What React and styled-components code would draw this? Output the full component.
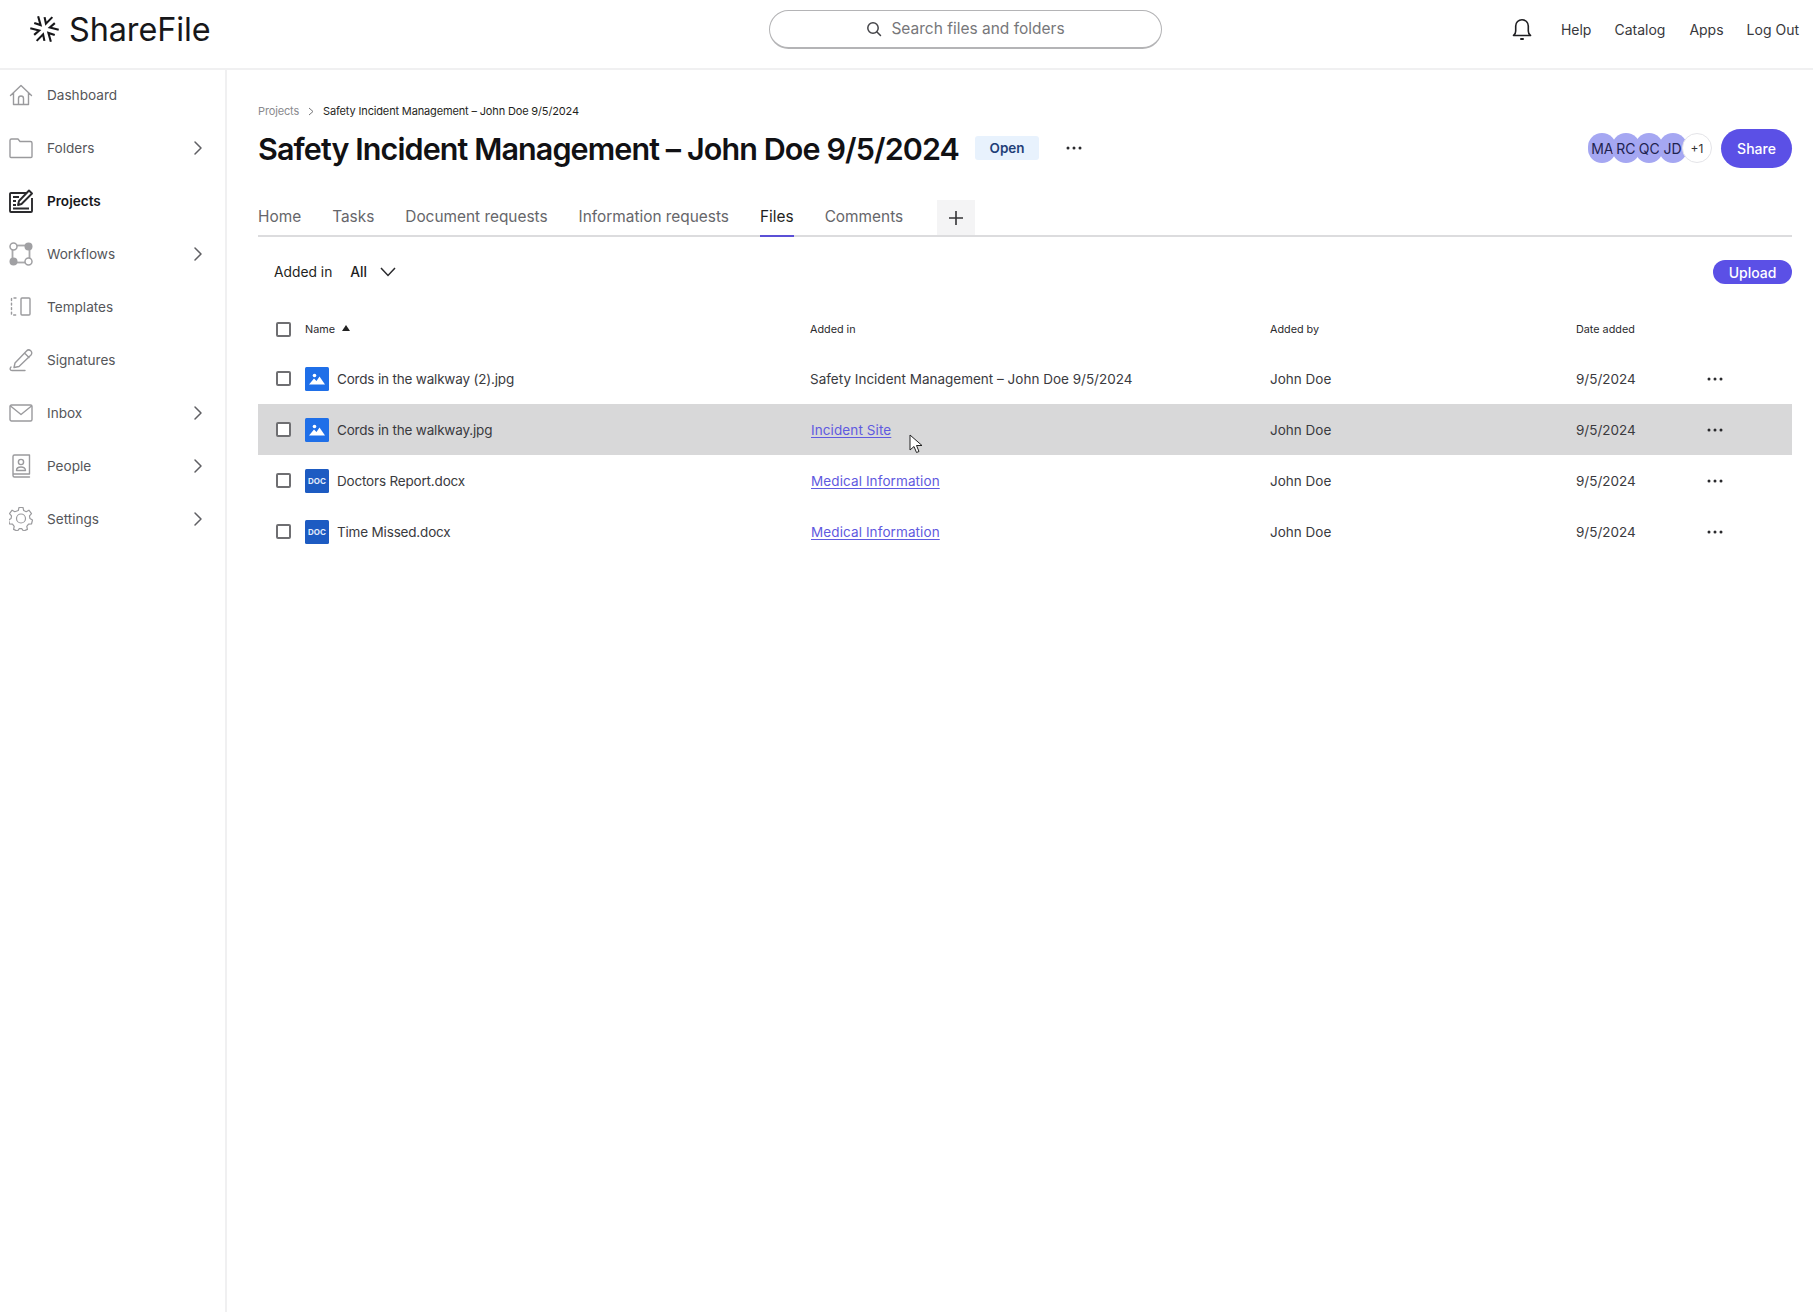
import React from "react";
import styled, { createGlobalStyle } from "styled-components";

const Global = createGlobalStyle`
  html, body { margin: 0; padding: 0; background: #fff; }
  body { font-family: Inter, "Liberation Sans", sans-serif; color: #1c1c1e; }
  * { box-sizing: border-box; }
`;

const Page = styled.div`
  width: 1813px; height: 1312px; overflow: hidden; display: flex; flex-direction: column; background: #fff;
`;
const Header = styled.header`
  height: 70px; flex: none; display: flex; align-items: center; position: relative;
  border-bottom: 2px solid #f0f0f1; padding: 0 14px 10px 30px; justify-content: space-between;
`;
const Brand = styled.div`
  display: flex; align-items: center; gap: 10px; width: 739px; height: 60px; color: #17171a;
`;
const BrandName = styled.span`
  font-size: 32.4px; font-weight: 400; letter-spacing: -0.1px;
`;
const Search = styled.div`
  width: 393px; height: 39px; border: 1px solid #b4b4b6; border-bottom-width: 2px; border-radius: 20px;
  display: flex; align-items: center; justify-content: center; gap: 9px;
  color: #77777a; font-size: 15.5px;
`;
const TopRight = styled.nav`
  display: flex; align-items: center; font-size: 14px; color: #38383c;
`;
const TopLink = styled.span`
  margin-left: ${p => p.$gap}px;
`;
const Body = styled.div`
  flex: 1; display: flex; min-height: 0;
`;
const Sidebar = styled.aside`
  width: 227px; flex: none; border-right: 2px solid #f0f0f1;
`;
const NavItem = styled.div`
  height: 53px; display: flex; align-items: center; padding: 0 22px 0 9px; gap: 14px;
  font-size: 13.6px; color: ${p => p.$active ? "#17171a" : "#55565a"}; font-weight: ${p => p.$active ? 600 : 400};
  margin-top: ${p => p.$first ? "-2px" : "0"};
`;
const NavIcon = styled.span`
  width: 24px; height: 24px; display: flex; align-items: center; justify-content: center; flex: none;
`;
const NavLabel = styled.span`
  flex: 1;
`;
const Main = styled.main`
  flex: 1; padding: 33px 21px 0 31px; position: relative; min-width: 0;
`;
const Crumbs = styled.div`
  display: flex; align-items: center; font-size: 11px; height: 16px; color: #1f1f22; letter-spacing: -0.15px;
`;
const CrumbRoot = styled.span`
  color: #8a8a8e;
`;
const CrumbSep = styled.span`
  margin: 0 9px 0 9px; display: flex;
`;
const TitleRow = styled.div`
  display: flex; align-items: center; margin-top: 7px; height: 44px;
`;
const Title = styled.h1`
  margin: 0; font-size: 30.5px; font-weight: 600; color: #111114; letter-spacing: -0.9px; white-space: nowrap;
`;
const Status = styled.span`
  margin-left: 16px; width: 64px; height: 24px; border-radius: 3px; background: #e8f2fd; color: #1f3f78;
  font-size: 13.5px; font-weight: 600; display: flex; align-items: center; justify-content: center;
`;
const MoreBtn = styled.span`
  margin-left: 27px; display: flex;
`;
const Spacer = styled.div`
  flex: 1;
`;
const Avatars = styled.div`
  display: flex; align-items: center; margin-right: 9px;
`;
const Avatar = styled.span`
  width: 28px; height: 30px; border-radius: 15px; background: #a5a7f2; color: #1f2350; font-size: 14px;
  display: flex; align-items: center; justify-content: center; overflow: hidden; margin-left: ${p => p.$first ? 0 : "-4.6px"};
  white-space: nowrap;
`;
const AvatarMore = styled.span`
  width: 30px; height: 30px; border-radius: 50%; background: #fff; border: 1px solid #e4e4e8; margin-left: -4.6px;
  font-size: 12px; color: #333; display: flex; align-items: center; justify-content: center; position: relative;
`;
const PrimaryBtn = styled.button`
  border: 0; background: #5b50e6; color: #fff; font-family: inherit; font-weight: 500; padding: 0; border-radius: 20px;
  width: ${p => p.$w}px; height: ${p => p.$h}px; font-size: 14px;
`;
const Tabs = styled.div`
  display: flex; align-items: stretch; height: 47px; margin-top: 20px; border-bottom: 2px solid #dcdcde; font-size: 15.4px;
`;
const Tab = styled.div`
  display: flex; align-items: center; margin-right: 31px; padding-top: 7px; margin-bottom: -2px;
  color: ${p => p.$active ? "#1f1f22" : "#66666a"}; font-weight: 400;
  border-bottom: 2px solid ${p => p.$active ? "#5b50d6" : "transparent"};
`;
const AddTab = styled.div`
  width: 38px; height: 35px; margin-left: 3px; background: #f4f4f5; display: flex; align-items: center; justify-content: center; align-self: flex-end;
`;
const FilterRow = styled.div`
  height: 70px; display: flex; align-items: center; padding-left: 16px; font-size: 13.8px; color: #1f1f22;
`;
const FilterValue = styled.span`
  margin-left: 18px; font-weight: 500;
`;
const Chevron = styled.span`
  margin-left: 13px; display: flex;
`;
const Row = styled.div`
  display: grid; grid-template-columns: 29px 505px 460px 306px 131px 85px; height: 51px; align-items: center;
  padding-left: 18px; font-size: 13.5px; color: ${p => p.$head ? "#2a2a2d" : "#3a3a3e"};
  background: ${p => p.$hover ? "#d8d8d9" : "transparent"};
`;
const HeadRow = styled(Row)`
  height: 40px; margin-top: 2px; margin-bottom: 4px; font-size: 10.8px;
`;
const CheckBox = styled.span`
  width: 15px; height: 15px; border: 2px solid #6f6f72; border-radius: 2px; background: #fff; display: block;
`;
const NameCell = styled.div`
  display: flex; align-items: center; gap: 8px; white-space: nowrap;
`;
const FileName = styled.span`
  letter-spacing: -0.18px;
`;
const SortMark = styled.span`
  margin-left: -1px; display: flex; margin-bottom: 2px;
`;
const FileTile = styled.span`
  width: 24px; height: 24px; border-radius: 1.5px; background: ${p => p.$doc ? "#1d5bc2" : "#1f6fe8"};
  color: #e3ecfb; font-size: 8px; font-weight: 700; display: flex; align-items: center; justify-content: center;
`;
const Link = styled.a`
  color: #5f5ae0; text-decoration: underline; text-underline-offset: 2px; margin-left: 1px; letter-spacing: 0.1px;
`;
const Dots = styled.span`
  display: flex;
`;
const Cursor = styled.svg`
  position: absolute; left: 682px; top: 364px;
`;

const s = { fill: "none", stroke: "#9a9a9d", strokeWidth: 1.4, strokeLinecap: "round", strokeLinejoin: "round" };

const LogoMark = () => (
  <svg width="29" height="30" viewBox="0 0 29 30" fill="none" stroke="#17171a" strokeWidth="2.100">
    {[15, 75, 135, 195, 255, 315].map(a => (
      <path key={a} transform={`rotate(${a} 14.500 15)`} d="M11.500 3.500 L14.500 9.500 L19 1.500" />
    ))}
  </svg>
);

const Home = () => <svg width="24" height="24" viewBox="0 0 24 24" {...s}><path d="M1.500 12.500 12 2.500l10.500 10M4.500 10v11.500h15V10M9.500 21.500v-6a2.500 2.500 0 0 1 5 0v6" /></svg>;
const Folder = () => <svg width="24" height="22" viewBox="0 0 24 22" {...s}><path d="M1 3.500A1.500 1.500 0 0 1 2.500 2H9l2 2.500h10.500A1.500 1.500 0 0 1 23 6v13.500a1 1 0 0 1-1 1H2a1 1 0 0 1-1-1z" /></svg>;
const ProjectsIcon = () => <svg width="24" height="24" viewBox="0 0 24 24" fill="none" stroke="#2a2a2d" strokeWidth="1.900" strokeLinejoin="round"><path d="M17 4H2a1 1 0 0 0-1 1v17a1 1 0 0 0 1 1h20a1 1 0 0 0 1-1V9" /><path d="M9 16l1-4L20 1.500l3 3L12.500 15zM4 8h6M4 12h3M4 16h3M4 19.500h16" /></svg>;
const Workflows = () => <svg width="24" height="24" viewBox="0 0 24 24" fill="none"><rect x="3.500" y="3.500" width="17" height="17" stroke="#a9a9ab" strokeWidth="1.800" /><circle cx="4.500" cy="4.500" r="3.500" fill="#fff" stroke="#a0a0a3" strokeWidth="1.500"/><circle cx="19.500" cy="4.500" r="4" fill="#a0a0a3"/><circle cx="4.500" cy="19.500" r="4" fill="#a0a0a3"/><circle cx="19.500" cy="19.500" r="3.500" fill="#fff" stroke="#a0a0a3" strokeWidth="1.500"/></svg>;
const Templates = () => <svg width="22" height="20" viewBox="0 0 22 20" {...s}><rect x="11" y="1" width="9" height="17" rx="1" /><path d="M6 1H2.500A1 1 0 0 0 1.500 2v15a1 1 0 0 0 1 1H6" strokeDasharray="2 2.500" /></svg>;
const Signatures = () => <svg width="24" height="24" viewBox="0 0 24 24" {...s}><path d="M6 15 17.500 3a3 3 0 0 1 4.500 4L10 18.500l-5 1zM15.500 5l4.500 4.500" /><path d="M2 19c-1.500 1.500-1 3.500 1 3.500h13" /></svg>;
const Inbox = () => <svg width="24" height="18" viewBox="0 0 24 18" {...s}><rect x="1" y="1" width="22" height="16" rx="1.500" /><path d="M1.500 2 12 10.500 22.500 2" /></svg>;
const People = () => <svg width="20" height="24" viewBox="0 0 20 24" {...s}><path d="M2 20V2.500A1.500 1.500 0 0 1 3.500 1h15v19zM2 20v1.500A1.500 1.500 0 0 0 3.500 23h15" /><circle cx="10" cy="8" r="2.600" /><path d="M5.500 16.500c0-2.500 2-3.500 4.500-3.500s4.500 1 4.500 3.500z" /></svg>;
const Gear = () => (
  <svg width="25" height="25" viewBox="0 0 24 24" fill="none" stroke="#9a9a9d" strokeWidth="1.200" strokeLinejoin="round">
    <path d="M10 1h4l.7 3 2.500 1.200 2.700-1.500 2.600 3.400-2 2.300.4 2.600 2.600 1.500-1 4-3 .2-1.700 2.200.6 3-3.800 1.700-1.900-2.400h-2.400l-1.900 2.400-3.800-1.700.6-3-1.700-2.200-3-.2-1-4 2.600-1.500.4-2.600-2-2.300 2.600-3.400 2.700 1.500L9.300 4z" />
    <circle cx="12" cy="12" r="4.500" />
  </svg>
);
const ChevronRight = () => <svg width="10" height="16" viewBox="0 0 10 16" fill="none" stroke="#5f5f63" strokeWidth="1.500" strokeLinecap="round" strokeLinejoin="round"><path d="M2 2l6 6-6 6" /></svg>;
const Spot = () => <svg width="16" height="16" viewBox="0 0 16 16" fill="none" stroke="#444448" strokeWidth="1.500" strokeLinecap="round"><circle cx="7" cy="7" r="5.200" /><path d="M11 11l3.500 3.500" /></svg>;
const Bell = () => <svg width="20" height="22" viewBox="0 0 20 22" fill="none" stroke="#1f1f22" strokeWidth="1.600" strokeLinecap="round" strokeLinejoin="round"><path d="M1.500 17.500c1.500-1 2.200-2 2.200-4.500V8a6.300 6.300 0 0 1 12.600 0v5c0 2.500.7 3.500 2.200 4.500z" /><path d="M9 21h2" strokeWidth="2" /></svg>;
const ThreeDots = () => <svg width="16" height="4" viewBox="0 0 16 4" fill="#2a2a2d"><circle cx="2" cy="2" r="1.500" /><circle cx="8" cy="2" r="1.500" /><circle cx="14" cy="2" r="1.500" /></svg>;
const Mountain = () => <svg width="16" height="12" viewBox="0 0 16 12" fill="#fff"><circle cx="5.500" cy="2.500" r="1.800" /><path d="M0 11.500 5 5.500l2.500 2.500L10.500 3.500 16 11.500z" /></svg>;

const nav = [
  ["Dashboard", <Home />, false],
  ["Folders", <Folder />, true],
  ["Projects", <ProjectsIcon />, false, true],
  ["Workflows", <Workflows />, true],
  ["Templates", <Templates />, false],
  ["Signatures", <Signatures />, false],
  ["Inbox", <Inbox />, true],
  ["People", <People />, true],
  ["Settings", <Gear />, true],
];

const PROJECT = "Safety Incident Management – John Doe 9/5/2024";
const files = [
  { name: "Cords in the walkway (2).jpg", where: PROJECT },
  { name: "Cords in the walkway.jpg", where: "Incident Site", link: true, hover: true },
  { name: "Doctors Report.docx", where: "Medical Information", link: true, doc: true },
  { name: "Time Missed.docx", where: "Medical Information", link: true, doc: true },
];

export default function App() {
  return (
    <Page>
      <Global />
      <Header>
        <Brand><LogoMark /><BrandName>ShareFile</BrandName></Brand>
        <Search><Spot /><span>Search files and folders</span></Search>
        <Spacer />
        <TopRight>
          <Bell />
          <TopLink $gap={29}>Help</TopLink>
          <TopLink $gap={23}>Catalog</TopLink>
          <TopLink $gap={24}>Apps</TopLink>
          <TopLink $gap={23}>Log Out</TopLink>
        </TopRight>
      </Header>
      <Body>
        <Sidebar>
          {nav.map(([label, icon, arrow, active], i) => (
            <NavItem key={label} $active={active} $first={i === 0}>
              <NavIcon>{icon}</NavIcon>
              <NavLabel>{label}</NavLabel>
              {arrow && <ChevronRight />}
            </NavItem>
          ))}
        </Sidebar>
        <Main>
          <Crumbs>
            <CrumbRoot>Projects</CrumbRoot>
            <CrumbSep><svg width="6" height="9" viewBox="0 0 6 9" fill="none" stroke="#77777a" strokeWidth="1"><path d="M1 1l4 3.500-4 3.500" /></svg></CrumbSep>
            <span>{PROJECT}</span>
          </Crumbs>
          <TitleRow>
            <Title>{PROJECT}</Title>
            <Status>Open</Status>
            <MoreBtn><ThreeDots /></MoreBtn>
            <Spacer />
            <Avatars>
              <Avatar $first>MA</Avatar>
              <Avatar>RC</Avatar>
              <Avatar>QC</Avatar>
              <Avatar>JD</Avatar>
              <AvatarMore>+1</AvatarMore>
            </Avatars>
            <PrimaryBtn $w={71} $h={39}>Share</PrimaryBtn>
          </TitleRow>
          <Tabs>
            <Tab>Home</Tab>
            <Tab>Tasks</Tab>
            <Tab>Document requests</Tab>
            <Tab>Information requests</Tab>
            <Tab $active>Files</Tab>
            <Tab>Comments</Tab>
            <AddTab>
              <svg width="14" height="14" viewBox="0 0 14 14" stroke="#333336" strokeWidth="1.600"><path d="M7 0v14M0 7h14" /></svg>
            </AddTab>
          </Tabs>
          <FilterRow>
            <span>Added in</span>
            <FilterValue>All</FilterValue>
            <Chevron><svg width="16" height="10" viewBox="0 0 16 10" fill="none" stroke="#2a2a2d" strokeWidth="1.500"><path d="M1 1l7 7.500L15 1" /></svg></Chevron>
            <Spacer />
            <PrimaryBtn $w={79} $h={24}>Upload</PrimaryBtn>
          </FilterRow>
          <HeadRow $head>
            <CheckBox />
            <NameCell>
              <span>Name</span>
              <SortMark><svg width="8" height="6" viewBox="0 0 8 6" fill="#222"><path d="M4 0l4 6H0z" /></svg></SortMark>
            </NameCell>
            <span>Added in</span>
            <span>Added by</span>
            <span>Date added</span>
            <span />
          </HeadRow>
          {files.map(f => (
            <Row key={f.name} $hover={f.hover}>
              <CheckBox />
              <NameCell>
                <FileTile $doc={f.doc}>{f.doc ? "DOC" : <Mountain />}</FileTile>
                <FileName>{f.name}</FileName>
              </NameCell>
              <span>{f.link ? <Link>{f.where}</Link> : f.where}</span>
              <span>John Doe</span>
              <span>9/5/2024</span>
              <Dots><ThreeDots /></Dots>
            </Row>
          ))}
          <Cursor width="14" height="20" viewBox="0 0 14 20" fill="#fff" stroke="#222" strokeWidth="1">
            <path d="M1 1v15l4-3.500 2.500 6 2.500-1-2.500-6H13z" />
          </Cursor>
        </Main>
      </Body>
    </Page>
  );
}
